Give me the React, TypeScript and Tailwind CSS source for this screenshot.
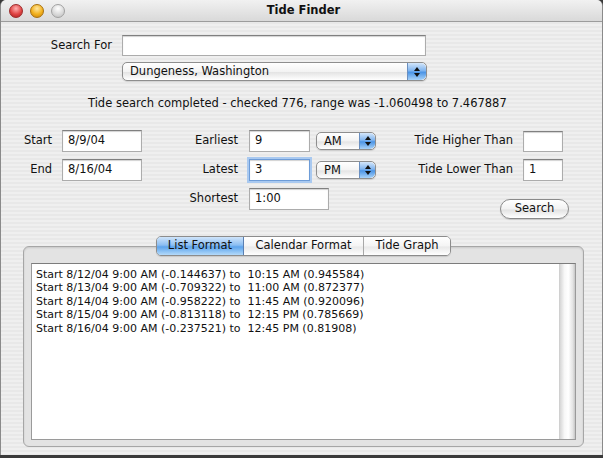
import type { ReactNode } from "react";

const font = { fontFamily: '"DejaVu Sans", Verdana, sans-serif' };

function Field({ w, h = 22, value, focused }: { w: string; h?: number; value?: string; focused?: boolean }) {
  return (
    <div
      className={`${w} flex items-center border bg-white pl-[5px] text-[11.5px] shadow-[inset_0_1px_1px_rgba(0,0,0,0.18)] ${
        focused
          ? "border-[#6d9cd8] ring-2 ring-[#a9c9f0]"
          : "border-[#acacac] border-t-[#808080]"
      }`}
      style={{ height: h }}
    >
      {value}
    </div>
  );
}

function Stepper({ w }: { w: string }) {
  return (
    <div
      className={`${w} flex h-full flex-col items-center justify-center gap-[2px] rounded-r-[5px] border-l border-[#6a8fc0] bg-[linear-gradient(#d4e6fa,#7fb4ef_45%,#4c95e6_55%,#a8d2f8)]`}
    >
      <svg width="6" height="4" viewBox="0 0 6 4">
        <path d="M3 0L6 4H0z" fill="#111" />
      </svg>
      <svg width="6" height="4" viewBox="0 0 6 4">
        <path d="M0 0H6L3 4z" fill="#111" />
      </svg>
    </div>
  );
}

function Popup({ w, h, label, stepW }: { w: string; h: string; label: string; stepW: string }) {
  return (
    <div
      className={`${w} ${h} flex overflow-hidden rounded-[5px] border border-[#8e8e8e] bg-[linear-gradient(#ffffff,#f3f3f3_50%,#e4e4e4_55%,#ffffff)] shadow-[0_1px_1px_rgba(0,0,0,0.12)]`}
    >
      <span className="flex-1 pl-[7px] text-[11.5px] leading-[17px]">{label}</span>
      <Stepper w={stepW} />
    </div>
  );
}

function Label({ children, className = "" }: { children: ReactNode; className?: string }) {
  return <span className={`text-right text-[11.5px] ${className}`}>{children}</span>;
}

function Light({ color }: { color: string }) {
  return <div className={`h-[14px] w-[14px] rounded-full border ${color}`} />;
}

const rows = [
  "Start 8/12/04 9:00 AM (-0.144637) to  10:15 AM (0.945584)",
  "Start 8/13/04 9:00 AM (-0.709322) to  11:00 AM (0.872377)",
  "Start 8/14/04 9:00 AM (-0.958222) to  11:45 AM (0.920096)",
  "Start 8/15/04 9:00 AM (-0.813118) to  12:15 PM (0.785669)",
  "Start 8/16/04 9:00 AM (-0.237521) to  12:45 PM (0.81908)",
];

export default function App() {
  return (
    <div className="h-[458px] w-[603px] overflow-hidden bg-[#3a3a3a] text-[#111]" style={font}>
      <div className="flex h-[455px] flex-col overflow-hidden rounded-t-[6px] border-x border-[#8a8a8a] bg-[repeating-linear-gradient(#efefef_0_2px,#e8e8e8_2px_4px)]">
        {/* title bar */}
        <div className="relative flex h-[22px] shrink-0 items-center border-b border-[#9c9c9c] bg-[linear-gradient(#f1f1f1,#d9d9d9)]">
          <div className="flex gap-[7px] pl-[8px]">
            <Light color="border-[#9c2a2a] bg-[radial-gradient(circle_at_50%_30%,#ffb0b0,#e04545_55%,#a82020)]" />
            <Light color="border-[#a8700c] bg-[radial-gradient(circle_at_50%_30%,#ffe7a0,#f2b11d_55%,#c58010)]" />
            <Light color="border-[#a0a0a0] bg-[radial-gradient(circle_at_50%_30%,#ffffff,#dadada_55%,#bdbdbd)]" />
          </div>
          <span className="absolute inset-x-0 pl-[4px] text-center text-[11.5px] font-bold">Tide Finder</span>
        </div>

        {/* search for */}
        <div className="mt-[13px] flex items-center">
          <Label className="w-[111px]">Search For</Label>
          <div className="ml-[10px]">
            <Field w="w-[304px]" h={21} />
          </div>
        </div>
        <div className="mt-[6px] pl-[121px]">
          <Popup w="w-[305px]" h="h-[19px]" label="Dungeness, Washington" stepW="w-[19px]" />
        </div>

        <div className="mt-[14px] pl-[87px] text-[11.5px] leading-[16px]">
          Tide search completed - checked 776, range was -1.060498 to 7.467887
        </div>

        {/* form */}
        <div className="mt-[19px] grid grid-cols-[51px_90px_96px_69px_69px_137px_56px] grid-rows-[22px_22px_22px] items-center gap-y-[7px]">
          <Label>Start</Label>
          <div className="ml-[10px]">
            <Field w="w-[80px]" value="8/9/04" />
          </div>
          <Label>Earliest</Label>
          <div className="ml-[11px]">
            <Field w="w-[61px]" value="9" />
          </div>
          <div className="ml-[9px]">
            <Popup w="w-[60px]" h="h-[18px]" label="AM" stepW="w-[16px]" />
          </div>
          <Label>Tide Higher Than</Label>
          <div className="ml-[10px]">
            <Field w="w-[40px]" h={21} />
          </div>

          <Label>End</Label>
          <div className="ml-[10px]">
            <Field w="w-[80px]" value="8/16/04" />
          </div>
          <Label>Latest</Label>
          <div className="ml-[11px]">
            <Field w="w-[61px]" value="3" focused />
          </div>
          <div className="ml-[9px]">
            <Popup w="w-[60px]" h="h-[18px]" label="PM" stepW="w-[16px]" />
          </div>
          <Label>Tide Lower Than</Label>
          <div className="ml-[10px]">
            <Field w="w-[40px]" h={22} value="1" />
          </div>

          <div />
          <div />
          <Label>Shortest</Label>
          <div className="col-span-2 ml-[11px]">
            <Field w="w-[80px]" value="1:00" />
          </div>
          <div className="col-span-2 mt-[11px] flex justify-end self-start">
            <div className="flex h-[20px] w-[69px] items-center justify-center rounded-full border border-[#8a8a8a] bg-[linear-gradient(#ffffff,#f2f2f2_50%,#e2e2e2_55%,#ffffff)] text-[11.5px] shadow-[0_1px_1px_rgba(0,0,0,0.15)]">
              Search
            </div>
          </div>
        </div>

        {/* tab view */}
        <div className="mt-[26px] ml-[22px] w-[561px]">
          <div className="relative z-10 flex justify-center">
            <div className="flex h-[20px] overflow-hidden rounded-[5px] border border-[#8c8c8c] text-[11.5px] shadow-[0_1px_1px_rgba(0,0,0,0.12)]">
              <div className="flex w-[87px] items-center justify-center border-r border-[#5a7fb2] bg-[linear-gradient(#cfe4fa,#8cbef2_45%,#5da4ec_55%,#b4dafa)]">
                List Format
              </div>
              <div className="flex w-[120px] items-center justify-center border-r border-[#a8a8a8] bg-[linear-gradient(#ffffff,#f4f4f4_50%,#e8e8e8_55%,#ffffff)]">
                Calendar Format
              </div>
              <div className="flex w-[86px] items-center justify-center bg-[linear-gradient(#ffffff,#f4f4f4_50%,#e8e8e8_55%,#ffffff)]">
                Tide Graph
              </div>
            </div>
          </div>
          <div className="-mt-[10px] h-[201px] rounded-[6px] border border-[#a6a6a6] bg-[#e3e3e3] px-[7px] pt-[16px] shadow-[inset_0_1px_2px_rgba(0,0,0,0.12)]">
            <div className="flex h-[177px] border border-[#9a9a9a] border-t-[#7c7c7c] bg-white">
              <div className="flex-1 pl-[4px] pt-[4px] text-[11px] leading-[13.4px] whitespace-pre">
                {rows.map((r) => (
                  <div key={r}>{r}</div>
                ))}
              </div>
              <div className="w-[16px] border-l border-[#d0d0d0] bg-[linear-gradient(to_right,#d6d6d6,#f7f7f7_30%,#ffffff_55%,#e4e4e4_85%,#c6c6c6)]" />
            </div>
          </div>
        </div>
      </div>
    </div>
  );
}
